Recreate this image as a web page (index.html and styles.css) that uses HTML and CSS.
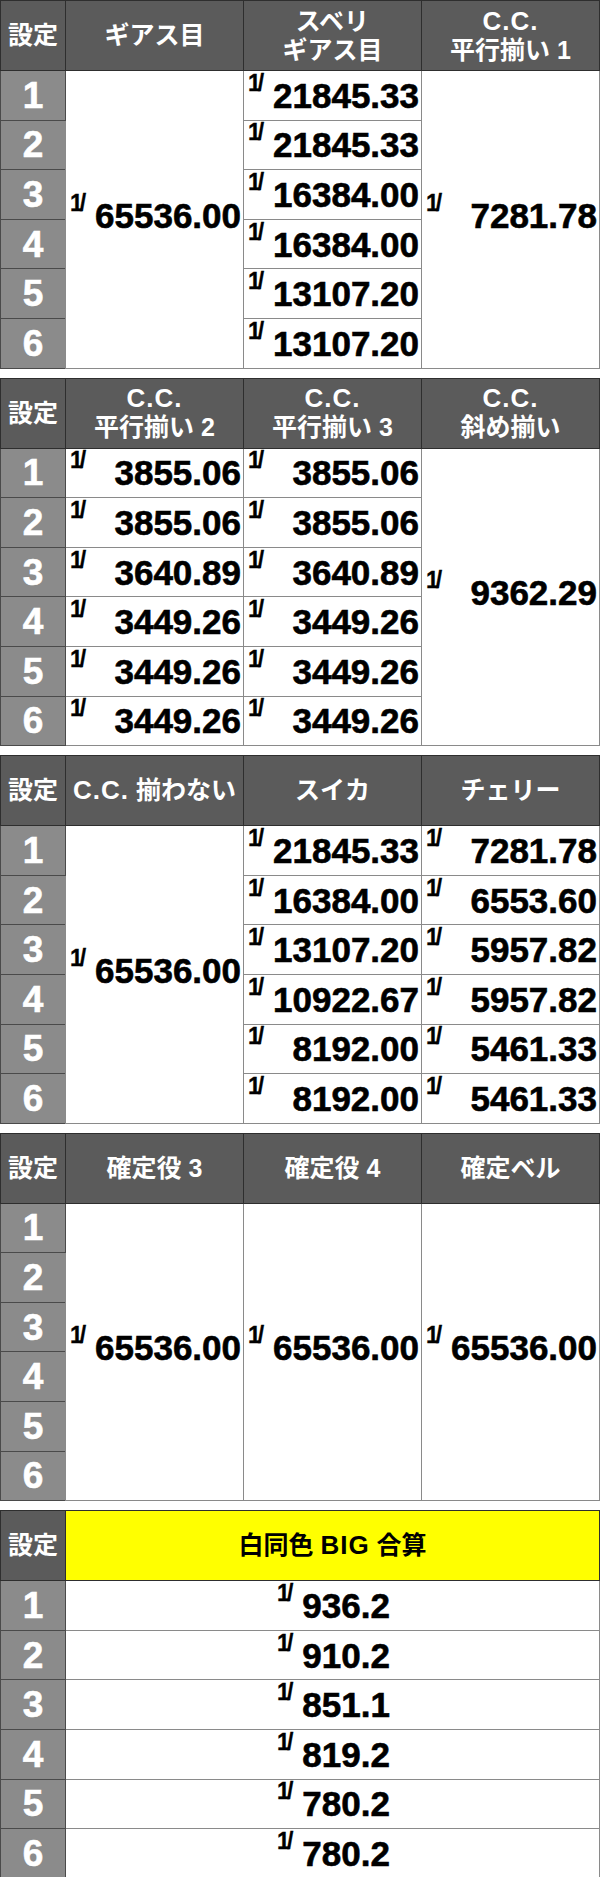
FILE: index.html
```html
<!DOCTYPE html>
<html lang="ja">
<head>
<meta charset="utf-8">
<link rel="stylesheet" href="styles.css">
</head>
<body>
<div class="page">

<table class="t t1">
<colgroup><col class="c0"><col class="c"><col class="c"><col class="c"></colgroup>
<tr class="hd"><th>設定</th><th>ギアス目</th><th>スベリ<br>ギアス目</th><th><span class="lat">C.C.</span><br>平行揃い 1</th></tr>
<tr><td class="n">1</td><td rowspan="6" class="v m"><div class="val"><span class="p">1/</span><span class="num">65536.00</span></div></td><td class="v"><div class="val"><span class="p">1/</span><span class="num">21845.33</span></div></td><td rowspan="6" class="v m"><div class="val"><span class="p">1/</span><span class="num">7281.78</span></div></td></tr>
<tr><td class="n">2</td><td class="v"><div class="val"><span class="p">1/</span><span class="num">21845.33</span></div></td></tr>
<tr><td class="n">3</td><td class="v"><div class="val"><span class="p">1/</span><span class="num">16384.00</span></div></td></tr>
<tr><td class="n">4</td><td class="v"><div class="val"><span class="p">1/</span><span class="num">16384.00</span></div></td></tr>
<tr><td class="n">5</td><td class="v"><div class="val"><span class="p">1/</span><span class="num">13107.20</span></div></td></tr>
<tr><td class="n">6</td><td class="v"><div class="val"><span class="p">1/</span><span class="num">13107.20</span></div></td></tr>
</table>

<table class="t t2">
<colgroup><col class="c0"><col class="c"><col class="c"><col class="c"></colgroup>
<tr class="hd"><th>設定</th><th><span class="lat">C.C.</span><br>平行揃い 2</th><th><span class="lat">C.C.</span><br>平行揃い 3</th><th><span class="lat">C.C.</span><br>斜め揃い</th></tr>
<tr><td class="n">1</td><td class="v"><div class="val"><span class="p">1/</span><span class="num">3855.06</span></div></td><td class="v"><div class="val"><span class="p">1/</span><span class="num">3855.06</span></div></td><td rowspan="6" class="v m"><div class="val"><span class="p">1/</span><span class="num">9362.29</span></div></td></tr>
<tr><td class="n">2</td><td class="v"><div class="val"><span class="p">1/</span><span class="num">3855.06</span></div></td><td class="v"><div class="val"><span class="p">1/</span><span class="num">3855.06</span></div></td></tr>
<tr><td class="n">3</td><td class="v"><div class="val"><span class="p">1/</span><span class="num">3640.89</span></div></td><td class="v"><div class="val"><span class="p">1/</span><span class="num">3640.89</span></div></td></tr>
<tr><td class="n">4</td><td class="v"><div class="val"><span class="p">1/</span><span class="num">3449.26</span></div></td><td class="v"><div class="val"><span class="p">1/</span><span class="num">3449.26</span></div></td></tr>
<tr><td class="n">5</td><td class="v"><div class="val"><span class="p">1/</span><span class="num">3449.26</span></div></td><td class="v"><div class="val"><span class="p">1/</span><span class="num">3449.26</span></div></td></tr>
<tr><td class="n">6</td><td class="v"><div class="val"><span class="p">1/</span><span class="num">3449.26</span></div></td><td class="v"><div class="val"><span class="p">1/</span><span class="num">3449.26</span></div></td></tr>
</table>

<table class="t t3">
<colgroup><col class="c0"><col class="c"><col class="c"><col class="c"></colgroup>
<tr class="hd"><th><span>設定</span></th><th><span class="lat">C.C.</span> 揃わない</th><th>スイカ</th><th>チェリー</th></tr>
<tr><td class="n">1</td><td rowspan="6" class="v m"><div class="val"><span class="p">1/</span><span class="num">65536.00</span></div></td><td class="v"><div class="val"><span class="p">1/</span><span class="num">21845.33</span></div></td><td class="v"><div class="val"><span class="p">1/</span><span class="num">7281.78</span></div></td></tr>
<tr><td class="n">2</td><td class="v"><div class="val"><span class="p">1/</span><span class="num">16384.00</span></div></td><td class="v"><div class="val"><span class="p">1/</span><span class="num">6553.60</span></div></td></tr>
<tr><td class="n">3</td><td class="v"><div class="val"><span class="p">1/</span><span class="num">13107.20</span></div></td><td class="v"><div class="val"><span class="p">1/</span><span class="num">5957.82</span></div></td></tr>
<tr><td class="n">4</td><td class="v"><div class="val"><span class="p">1/</span><span class="num">10922.67</span></div></td><td class="v"><div class="val"><span class="p">1/</span><span class="num">5957.82</span></div></td></tr>
<tr><td class="n">5</td><td class="v"><div class="val"><span class="p">1/</span><span class="num">8192.00</span></div></td><td class="v"><div class="val"><span class="p">1/</span><span class="num">5461.33</span></div></td></tr>
<tr><td class="n">6</td><td class="v"><div class="val"><span class="p">1/</span><span class="num">8192.00</span></div></td><td class="v"><div class="val"><span class="p">1/</span><span class="num">5461.33</span></div></td></tr>
</table>

<table class="t t4">
<colgroup><col class="c0"><col class="c"><col class="c"><col class="c"></colgroup>
<tr class="hd"><th>設定</th><th>確定役 3</th><th>確定役 4</th><th>確定ベル</th></tr>
<tr><td class="n">1</td><td rowspan="6" class="v m"><div class="val"><span class="p">1/</span><span class="num">65536.00</span></div></td><td rowspan="6" class="v m"><div class="val"><span class="p">1/</span><span class="num">65536.00</span></div></td><td rowspan="6" class="v m"><div class="val"><span class="p">1/</span><span class="num">65536.00</span></div></td></tr>
<tr><td class="n">2</td></tr>
<tr><td class="n">3</td></tr>
<tr><td class="n">4</td></tr>
<tr><td class="n">5</td></tr>
<tr><td class="n">6</td></tr>
</table>

<table class="t t5">
<colgroup><col class="c0"><col class="c"><col class="c"><col class="c"></colgroup>
<tr class="hd"><th>設定</th><th colspan="3" class="yel">白同色 <span class="lat">BIG</span> 合算</th></tr>
<tr><td class="n">1</td><td colspan="3" class="v"><div class="val mid"><span class="p">1/</span><span class="num">936.2</span></div></td></tr>
<tr><td class="n">2</td><td colspan="3" class="v"><div class="val mid"><span class="p">1/</span><span class="num">910.2</span></div></td></tr>
<tr><td class="n">3</td><td colspan="3" class="v"><div class="val mid"><span class="p">1/</span><span class="num">851.1</span></div></td></tr>
<tr><td class="n">4</td><td colspan="3" class="v"><div class="val mid"><span class="p">1/</span><span class="num">819.2</span></div></td></tr>
<tr><td class="n">5</td><td colspan="3" class="v"><div class="val mid"><span class="p">1/</span><span class="num">780.2</span></div></td></tr>
<tr><td class="n">6</td><td colspan="3" class="v"><div class="val mid"><span class="p">1/</span><span class="num">780.2</span></div></td></tr>
</table>

</div>
</body>
</html>
```
FILE: styles.css
```css
html, body {
  margin: 0;
  padding: 0;
  background: #ffffff;
}
body {
  font-family: "Liberation Sans", "Noto Sans CJK JP", sans-serif;
  font-weight: bold;
  color: #000;
}
.page {
  display: flex;
  flex-direction: column;
  gap: 9px;
  width: 599px;
}
.t {
  border-collapse: collapse;
  table-layout: fixed;
  width: 599px;
}
.c0 { width: 65px; }
.c { width: 178px; }
.t th, .t td {
  padding: 0;
  border: 1px solid #7a7a7a;
}
.hd th {
  height: 69px;
  background: #5b5b5b;
  color: #fff;
  font-size: 25px;
  line-height: 29px;
  font-weight: bold;
  text-align: center;
  vertical-align: middle;
  border-color: #2e2e2e;
  white-space: nowrap;
}
.hd th .lat {
  font-size: 26px;
  letter-spacing: 1px;
}
.hd th.yel {
  background: #ffff00;
  color: #000;
}
.t td {
  height: 48.6px;
}
.t td.n {
  background: #8b8b8b;
  color: #fff;
  font-size: 37px;
  text-align: center;
  vertical-align: middle;
  border-color: #4a4a4a;
  line-height: 1;
  -webkit-text-stroke: 0.6px #fff;
}
.t td.v {
  background: #fff;
  vertical-align: middle;
  border-color: #8a8a8a;
}
.val {
  display: flex;
  justify-content: space-between;
  align-items: flex-start;
  padding: 0 2px 0 4px;
}
.m .val {
  padding-bottom: 8px;
}
.val.mid {
  justify-content: center;
  gap: 12px;
}
.p {
  font-size: 23px;
  line-height: 1;
  letter-spacing: -3px;
  margin-top: -6px;
  -webkit-text-stroke: 0.3px #000;
}
.num {
  font-size: 35px;
  line-height: 1;
  letter-spacing: 0;
  -webkit-text-stroke: 0.6px #000;
}
```
